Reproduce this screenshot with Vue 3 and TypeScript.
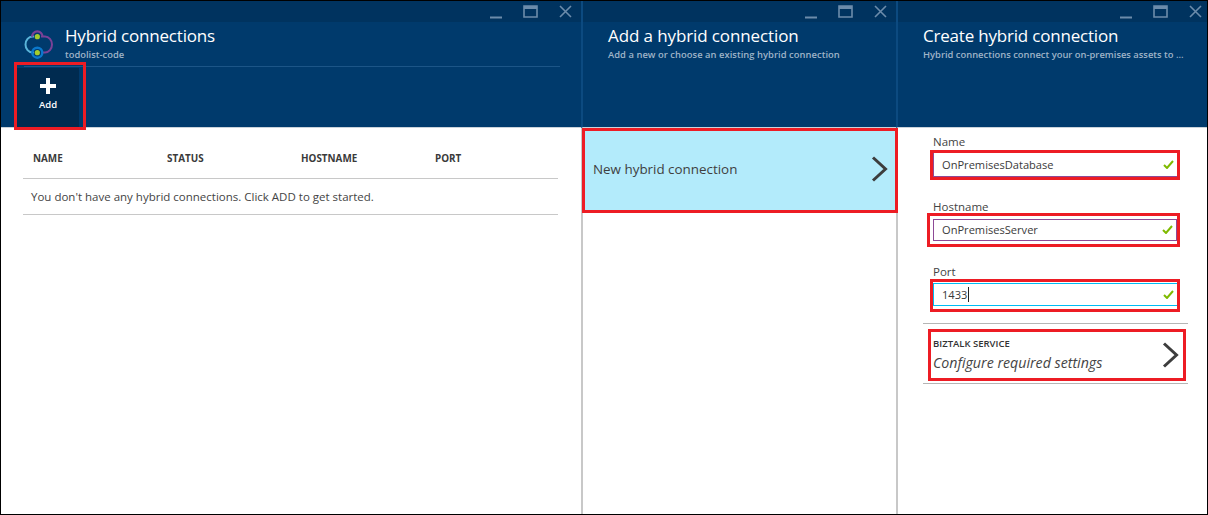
<script setup lang="ts">
const columns: string[] = ['NAME', 'STATUS', 'HOSTNAME', 'PORT']
</script>

<template>
  <div class="page">
    <section class="blade blade-one">
      <header class="head">
        <div class="winbar">
          <svg class="win" width="83" height="14" viewBox="0 0 83 14">
            <path d="M0 12.5h12" class="wl" stroke-width="2" />
            <path d="M34 1h13v11h-13z" class="wl" stroke-width="1.6" />
            <path d="M34 2.500h13" class="wl" stroke-width="3" />
            <path d="M70 1l11 11M81 1l-11 11" class="wl" stroke-width="1.6" />
          </svg>
        </div>
        <div class="title-row title-row-icon">
          <svg class="logo" width="30" height="32" viewBox="0 0 30 32">
            <path d="M10 6.500H8.500a7 8 0 0 0-7 8 7 8 0 0 0 7 8H10" fill="none" stroke="#59b4d9" stroke-width="2" />
            <path d="M17 6.500h4a7 8 0 0 1 7 8 7 8 0 0 1-7 8h-3" fill="none" stroke="#7a4197" stroke-width="2" />
            <path d="M8 6.700a5.300 5.300 0 0 1 10.600 0" fill="none" stroke="#7a4197" stroke-width="2.200" />
            <circle cx="13.300" cy="22.700" r="5" fill="none" stroke="#0a78cc" stroke-width="2.400" />
            <circle cx="13.300" cy="6.700" r="2.600" fill="#a4cd2c" />
            <circle cx="13.300" cy="22.700" r="2.600" fill="#a4cd2c" />
          </svg>
          <div>
            <h1 class="title">Hybrid connections</h1>
            <p class="sub">todolist-code</p>
          </div>
        </div>
        <div class="rule"></div>
        <div class="cmd-mark">
          <button class="add">
            <svg width="16" height="16" viewBox="0 0 16 16"><path d="M6 0h4v6h6v4h-6v6H6v-6H0V6h6z" fill="#fff" /></svg>
            <span>Add</span>
          </button>
        </div>
      </header>
      <div class="body body-one">
        <div class="thead">
          <span v-for="c in columns" :key="c" class="th">{{ c }}</span>
        </div>
        <div class="empty">You don't have any hybrid connections. Click ADD to get started.</div>
      </div>
    </section>

    <section class="blade blade-two">
      <header class="head">
        <div class="winbar">
          <svg class="win" width="83" height="14" viewBox="0 0 83 14">
            <path d="M0 12.5h12" class="wl" stroke-width="2" />
            <path d="M34 1h13v11h-13z" class="wl" stroke-width="1.6" />
            <path d="M34 2.500h13" class="wl" stroke-width="3" />
            <path d="M70 1l11 11M81 1l-11 11" class="wl" stroke-width="1.6" />
          </svg>
        </div>
        <div class="title-row">
          <div>
            <h1 class="title">Add a hybrid connection</h1>
            <p class="sub">Add a new or choose an existing hybrid connection</p>
          </div>
        </div>
      </header>
      <div class="body">
        <div class="new-item">
          <span>New hybrid connection</span>
          <svg width="18" height="26" viewBox="0 0 18 26"><path d="M2 1.500 14.500 13 2 24.500" fill="none" stroke="#3d3d3d" stroke-width="3" /></svg>
        </div>
      </div>
    </section>

    <section class="blade blade-three">
      <header class="head">
        <div class="winbar">
          <svg class="win" width="83" height="14" viewBox="0 0 83 14">
            <path d="M0 12.5h12" class="wl" stroke-width="2" />
            <path d="M34 1h13v11h-13z" class="wl" stroke-width="1.6" />
            <path d="M34 2.500h13" class="wl" stroke-width="3" />
            <path d="M70 1l11 11M81 1l-11 11" class="wl" stroke-width="1.6" />
          </svg>
        </div>
        <div class="title-row">
          <div>
            <h1 class="title">Create hybrid connection</h1>
            <p class="sub">Hybrid connections connect your on-premises assets to ...</p>
          </div>
        </div>
      </header>
      <div class="body form">
        <label class="lab">Name</label>
        <div class="mark mark-name">
          <div class="input">
            <span>OnPremisesDatabase</span>
            <svg width="11" height="9" viewBox="0 0 11 9"><path d="M1 5l3 3 6-7" fill="none" stroke="#7fba00" stroke-width="2" /></svg>
          </div>
        </div>
        <label class="lab lab-host">Hostname</label>
        <div class="mark mark-host">
          <div class="input">
            <span>OnPremisesServer</span>
            <svg width="11" height="9" viewBox="0 0 11 9"><path d="M1 5l3 3 6-7" fill="none" stroke="#7fba00" stroke-width="2" /></svg>
          </div>
        </div>
        <label class="lab lab-port">Port</label>
        <div class="mark mark-port">
          <div class="input input-focus">
            <span class="typed">1433</span>
            <svg width="11" height="9" viewBox="0 0 11 9"><path d="M1 5l3 3 6-7" fill="none" stroke="#7fba00" stroke-width="2" /></svg>
          </div>
        </div>
        <div class="biz-wrap">
          <div class="biz">
            <div class="biz-copy">
              <div class="biz-title">BIZTALK SERVICE</div>
              <div class="biz-text">Configure required settings</div>
            </div>
            <svg width="18" height="26" viewBox="0 0 18 26"><path d="M2 1.500 14.500 13 2 24.500" fill="none" stroke="#3d3d3d" stroke-width="3" /></svg>
          </div>
        </div>
      </div>
    </section>
  </div>
</template>

<style>
html, body { margin: 0; background: #fff; }
</style>

<style scoped>
.page {
  box-sizing: border-box;
  width: 1208px;
  height: 515px;
  display: flex;
  border: 1px solid #000;
  font-family: "Open Sans", "Noto Sans", sans-serif;
  overflow: hidden;
}
.blade { display: flex; flex-direction: column; height: 100%; flex: none; box-sizing: border-box; }
.blade-one { width: 580px; }
.blade-two { width: 315px; border-left: 2px solid #c8c8c8; }
.blade-three { width: 311px; border-left: 2px solid #c8c8c8; }
.head {
  height: 126px;
  flex: none;
  background: #003a6c;
  border-bottom: 1px solid #c9d2da;
  box-sizing: content-box;
  position: relative;
}
.blade-two .head, .blade-three .head { margin-left: -2px; border-left: 2px solid #0c4a80; }
.winbar {
  height: 21px;
  background: #00335f;
  display: flex;
  justify-content: flex-end;
  align-items: flex-start;
  padding: 4px 8px 0 0;
  box-sizing: border-box;
}
.blade-three .winbar { padding-right: 4px; }
.win { display: block; }
.wl { fill: none; stroke: #6c8cab; }
.title-row { padding: 2px 0 0 25px; display: flex; gap: 11px; }
.title-row-icon { padding-left: 23px; }
.logo { margin-top: 6px; }
.title {
  margin: 0;
  font-size: 17px;
  line-height: 24px;
  font-weight: 400;
  letter-spacing: -0.2px;
  color: #fff;
  white-space: nowrap;
}
.blade-two .title { letter-spacing: -0.11px; }
.sub {
  margin: 0;
  font-size: 9.4px;
  line-height: 13px;
  font-weight: 600;
  color: #9fb4c8;
  white-space: nowrap;
}
.blade-two .sub { letter-spacing: 0.04px; }
.rule { height: 1px; background: #1c5587; margin: 4px 21px 0 23px; }
.cmd-mark {
  position: absolute;
  left: 13px;
  top: 61px;
  width: 72px;
  height: 68px;
  box-sizing: border-box;
  border: 3px solid #ed1c24;
  padding: 3px 5px 0 0;
  z-index: 2;
}
.add {
  display: flex;
  flex-direction: column;
  align-items: center;
  width: 62px;
  height: 59px;
  margin: 0;
  padding: 10px 0 0;
  border: 0;
  background: #002b50;
  color: #fff;
  font: 600 9.5px "Open Sans", sans-serif;
}
.add span { margin-top: 4px; }
.body { flex: 1; background: #fff; }
.body-one { padding: 21px 23px 0 22px; }
.thead {
  display: grid;
  grid-template-columns: repeat(4, 134px) 1fr;
  padding: 0 0 11px 10px;
  height: 30px;
  box-sizing: border-box;
  align-items: center;
  border-bottom: 1px solid #c8c8c8;
}
.th { font-size: 9.9px; font-weight: 700; color: #3a3a3a; }
.empty {
  height: 35px;
  padding-left: 8px;
  display: flex;
  align-items: center;
  font-size: 11.5px;
  color: #444;
  border-bottom: 1px solid #c8c8c8;
}
.new-item {
  box-sizing: border-box;
  height: 85px;
  margin: 0 0 0 -1px;
  width: 316px;
  border: 3px solid #ed1c24;
  background: #b3ebfb;
  display: flex;
  align-items: center;
  justify-content: space-between;
  padding: 0 6px 3px 8px;
  font-size: 13.4px;
  color: #3f3f3f;
  position: relative;
}
.form { padding: 5px 0 0 25px; }
.lab { display: block; padding-left: 10px; font-size: 11.5px; line-height: 17px; color: #444; }
.mark { box-sizing: border-box; border: 3px solid #ed1c24; width: 250px; margin-left: 7px; }
.mark-name { height: 30px; }
.lab-host { margin: 18px 0 -2px; }
.mark-host { height: 34px; width: 253px; margin-left: 4px; padding: 3px 0 0 3px; }
.lab-port { margin: 16px 0 -1px; }
.mark-port { height: 33px; padding-top: 1px; }
.input {
  box-sizing: border-box;
  height: 24px;
  display: flex;
  align-items: center;
  justify-content: space-between;
  padding: 0 3px 0 9px;
  font-size: 11.1px;
  color: #3a3a3a;
  border-bottom: 1px solid #8d4a96;
}
.mark-name .input { border-left: 1px solid #8d4a96; padding-left: 8px; }
.mark-host .input { height: 22px; border: 1px solid #8d4a96; width: 244px; padding: 0 3px 1px 8px; }
.input-focus { height: 23px; border-top: 1px solid #00bcf2; border-bottom: 1px solid #00bcf2; border-left: 1px solid #00bcf2; padding-left: 8px; }
.typed { border-right: 1px solid #222; padding-right: 1px; }
.biz-wrap {
  margin-top: 11px;
  margin-right: 19px;
  padding: 5px 0 2px;
  border-top: 1px solid #b5b5b5;
  border-bottom: 1px solid #b5b5b5;
}
.biz {
  box-sizing: border-box;
  height: 52px;
  margin: 0 2px 0 5px;
  border: 3px solid #ed1c24;
  display: flex;
  align-items: center;
  justify-content: space-between;
  padding: 0 3px 1px 2px;
}
.biz-copy { padding-top: 2px; }
.biz-title { font-size: 9.5px; font-weight: 600; color: #333; line-height: 12px; }
.biz-text { font-size: 14.2px; font-style: italic; color: #444; line-height: 20px; margin-top: 3px; }
</style>
